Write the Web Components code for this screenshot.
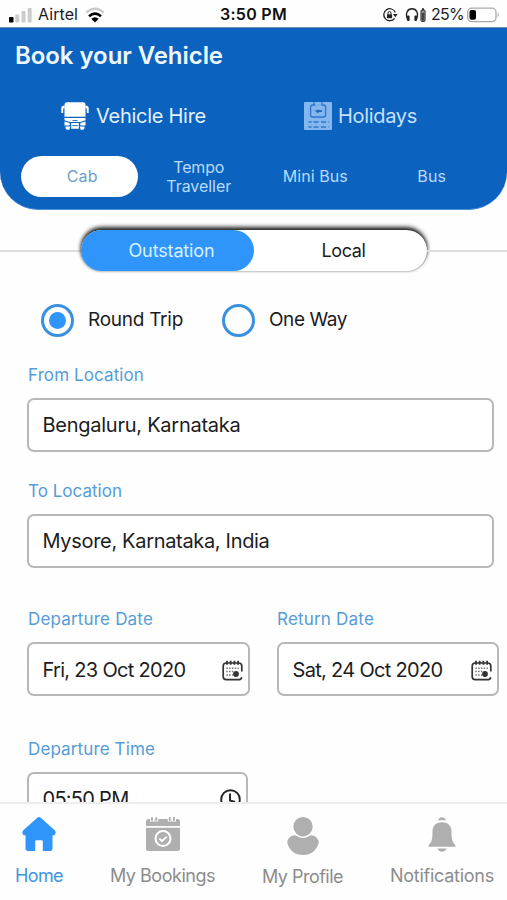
<!DOCTYPE html>
<html lang="en">
<head>
<meta charset="utf-8">
<title>Book your Vehicle</title>
<style>
  html, body { margin: 0; height: 100%; overflow: hidden; background: #fefefe; }
  body { font-family: Inter, "Liberation Sans", sans-serif; color: #1c1c1e; }
</style>
</head>
<body>
<booking-app></booking-app>
<script>
// Registers an element whose shadow root is filled from a template string.
function define(name, render, ready) {
  customElements.define(name, class extends HTMLElement {
    connectedCallback() {
      if (this.shadowRoot) return;
      const t = document.createElement('template');
      t.innerHTML = render(this);
      this.attachShadow({ mode: 'open' }).append(t.content.cloneNode(true));
      if (ready) ready(this);
    }
  });
}

// One line of text, tracked so that it fills the width given in "w".
define('ui-text', el => `
  <style>
    :host { display: inline-block; white-space: nowrap; flex: none; line-height: 1.2; width: ${el.getAttribute('w')}px; }
    span { display: inline-block; }
  </style><span><slot></slot></span>`,
  el => {
    const span = el.shadowRoot.querySelector('span');
    const want = +el.getAttribute('w');
    const have = span.getBoundingClientRect().width;
    span.style.letterSpacing = ((want - have) / el.textContent.length).toFixed(3) + 'px';
  });

const ICONS = {
  signal: [24, 16, `<g><rect x="0" y="10" width="4.500" height="5.500" rx="1" fill="#000"/><rect x="6.300" y="7.400" width="4" height="8.100" rx="1" fill="#ccc"/><rect x="12.500" y="4" width="4" height="11.500" rx="1" fill="#ccc"/><rect x="18.700" y="1" width="4" height="14.500" rx="1" fill="#ccc"/></g>`],
  wifi: [20, 16, `<g fill="none" stroke-width="2.200"><path d="M1.300 5.600Q10-2.200 18.700 5.600" stroke="#cacaca"/><path d="M4 9.200Q10 3.900 16 9.200" stroke="#000" stroke-width="2.600"/></g><path d="M6.300 11.700Q10 8.700 13.700 11.700L10 15.500z" fill="#000"/>`],
  lock: [16, 16, `<path d="M12.600 11.300A6 6 0 1 1 13.300 5.400" fill="none" stroke="#222" stroke-width="1.300"/><path d="M10.900 7h4.800l-2.400 3.300z" fill="#222"/><rect x="4.900" y="7.200" width="5.200" height="4" rx=".6" fill="#222"/><path d="M6 7.400V6a1.500 1.500 0 0 1 3 0v1.400" fill="none" stroke="#222" stroke-width="1"/>`],
  phones: [23, 16, `<path d="M2.600 12.500C-.2 6 2.800 1.800 7 1.800s7.200 4.200 4.400 10.700" fill="none" stroke="#222" stroke-width="1.400"/><rect x="2" y="8.500" width="2.600" height="5.500" rx="1" fill="#222"/><rect x="9.400" y="8.500" width="2.600" height="5.500" rx="1" fill="#222"/><rect x="15.900" y="3" width="4.200" height="11.500" rx="1" fill="#888" stroke="#333" stroke-width=".9"/><rect x="17" y="1.300" width="2" height="1.600" fill="#222"/><rect x="16.800" y="6" width="2.400" height="7.500" fill="#444"/>`],
  battery: [33, 16, `<rect x=".7" y="1.200" width="28.300" height="13.400" rx="4" fill="#fff" stroke="#a9a9a9" stroke-width="1.300"/><rect x="2.500" y="3" width="6.500" height="9.800" rx="2" fill="#000"/><path d="M30.700 5.500q2 2.400 0 4.800z" fill="#999"/>`],
  bus: [28, 28, `<g fill="#fff"><path d="M6 .3h16q2.500 0 2.500 3v11.400H3.500V3.300q0-3 2.500-3z"/><path d="M3.500 3.500Q.3 3.500.3 6v5h1.900V6.500h1.500zM24.500 3.500q3.200 0 3.200 2.500v5h-1.900V6.500h-1.500z"/><path d="M3.500 16h21v2.300l-5 1.700h-11l-5-1.700z"/><path d="M3.500 19.500l5 1.600q1 2-.2 2.400H3.500zM24.500 19.500l-5 1.600q-1 2 .2 2.400h4.800zM10.200 21h7.600v5.800h-7.600zM4.500 24.500h4.800L8.300 27.700H6.500q-2 0-2-2zM23.500 24.500h-4.800l1 3.200h1.800q2 0 2-2z"/></g><path d="M11.500 18.600h5M11.200 23.600h5.600" stroke="#0b62bd" stroke-width=".9"/>`],
  holiday: [28, 28, `<rect width="28" height="28" rx="1" fill="#85b7ee"/><g fill="none" stroke="#2e75c8" stroke-width="1.300"><path d="M10 0v3.500M18 0v3.500"/><rect x="6.600" y="3" width="15" height="12" rx="2"/></g><path d="M9.800 7.700l2.500 1 1.500-1.500 1.500 1H18V10h-2.700l-1.500 1.300L12.300 10z" fill="#2467b8"/><path d="M11 3h6.500" stroke="#85b7ee" stroke-width="1.700"/><g stroke="#2e75c8" stroke-width="1.300" stroke-dasharray="3 2 5 2.500 5 2 3"><path d="M4.500 20h20M4.500 25h20"/></g>`],
  calendar: [21, 21, `<g fill="none" stroke="#333" stroke-width="1.700"><path d="M19.800 11.500V6.200q0-3.200-3.200-3.200H4.300Q1.200 3 1.200 6.200v10.300q0 3.200 3.100 3.200h12.200q2.700 0 3.300-2.500"/><path d="M5 .7v4M8.700 .7v4M12.400 .7v4M16.100 .7v4" stroke-width="1.800"/></g><g stroke="#777" stroke-width="1.500" stroke-dasharray="1.500 1.300"><path d="M4.300 8.300h12.500M4.300 11.600h7M4.300 15h7"/></g><circle cx="14" cy="14" r="2.900" fill="#333"/>`],
  clock: [21, 21, `<g fill="none" stroke="#222" stroke-width="1.900"><circle cx="10.500" cy="10.500" r="9.300"/><path d="M10 4.500v7l5 1.500"/></g>`],
  home: [34, 34, `<path d="M15.300.7q1.700-1.200 3.400 0L33 13.600q1.500 1.900-.4 4.600H30.500v13q0 2.800-2.800 2.800h-6.900V24.500q0-1.200-1.200-1.200h-5.200q-1.200 0-1.200 1.200V34H6.300q-2.800 0-2.800-2.800v-13H1.400Q-.5 15.500 1 13.600z" fill="#2f95fb"/>`],
  bookings: [34, 34, `<path d="M0 4.500q0-2.500 2.500-2.500h29Q34 2 34 4.500V9H0z M0 10.700h34V31.500q0 2.500-2.500 2.500h-29Q0 34 0 31.500z" fill="#afafaf"/><g stroke="#fff" stroke-width="4"><path d="M6 0v4.600M10.300 0v4.600M23.700 0v4.600M28 0v4.600"/></g><g stroke="#afafaf" stroke-width="2" stroke-linecap="round"><path d="M6 1v2M10.300 1v2M23.700 1v2M28 1v2"/></g><g fill="none" stroke="#fff" stroke-width="2"><circle cx="17" cy="21.500" r="7.500"/><path d="M13.300 21.500l2.700 2.600 4.700-4.500"/></g>`],
  profile: [32, 38, `<circle cx="16" cy="9.700" r="9.700" fill="#afafaf"/><path d="M5 18.800Q8 17.500 9.800 19q6.200 4 12.400 0Q24 17.500 27 18.800q5 2.700 4.700 7.200Q28 38 16 38T.3 26Q0 21.500 5 18.800z" fill="#afafaf"/>`],
  bell: [28, 35, `<g fill="#afafaf"><path d="M10 3.500q1.300-3.300 4-3.300t4 3.300Q14 2.300 10 3.500z"/><path d="M14 5.200c6.500 0 9.500 4 9.500 9.300 0 7.500.8 10.500 3.700 13.500.7.800.4 1.700-.7 1.700h-25c-1.100 0-1.400-.9-.7-1.700 2.900-3 3.700-6 3.700-13.500 0-5.300 3-9.300 9.500-9.300z"/><path d="M9.500 31.500h9q-1.200 3.300-4.500 3.300t-4.500-3.300z"/></g>`]
};

define('ui-icon', el => {
  const [w, h, body] = ICONS[el.getAttribute('name')];
  return `<style>:host{display:block;flex:none;width:${w}px;height:${h}px}svg{display:block}</style>
    <svg width="${w}" height="${h}" viewBox="0 0 ${w} ${h}">${body}</svg>`;
});

define('status-bar', () => `
  <style>
    :host { display: grid; grid-template-columns: 1fr auto 1fr; align-items: center; height: 28px; padding: 3px 9px 0 9px; box-sizing: border-box; font-size: 16px; border-bottom: 1px solid #6f8fae; }
    div { display: flex; align-items: center; }
    .right { justify-content: flex-end; }
    b { font-weight: 600; color: #111; display: flex; }
  </style>
  <div><ui-icon name="signal"></ui-icon><ui-text w="40" style="margin:0 7px 0 5px">Airtel</ui-text><ui-icon name="wifi"></ui-icon></div>
  <b><ui-text w="67">3:50 PM</ui-text></b>
  <div class="right"><ui-icon name="lock" style="margin-right:7px"></ui-icon><ui-icon name="phones" style="margin-right:3px"></ui-icon><ui-text w="33" style="margin-right:3px">25%</ui-text><ui-icon name="battery" style="margin-right:-2px"></ui-icon></div>`);

define('mode-tab', el => `
  <style>
    :host { display: flex; align-items: center; gap: 7px; font-size: 20px; color: #c5e1fc; }
  </style>
  <ui-icon name="${el.getAttribute('icon')}"></ui-icon><slot></slot>`);

define('vehicle-tab', () => `
  <style>
    :host { display: flex; flex-direction: column; align-items: center; justify-content: center; box-sizing: border-box; width: 116.500px; height: 41px; padding: 1px 0 0 6px; border-radius: 21px; font-size: 16px; color: #b9dcfc; }
    :host([active]) { background: #fff; color: #6f9fd0; }
  </style><slot></slot>`);

define('app-header', () => `
  <style>
    :host { display: block; box-sizing: border-box; height: 182px; background: #0b62bf; border-radius: 0 0 38px 38px; padding: 14px 0 0; border-bottom: 1px solid #4d90d6; }
    h1 { margin: 0 15px; font-size: 24px; font-weight: 600; color: #eef7ff; display: flex; }
    .modes { display: flex; padding: 31px 0 0 61px; gap: 98px; }
    .modes mode-tab:first-child { color: #e4f2ff; }
    .types { display: flex; padding: 26px 0 0 21px; }
  </style>
  <h1><ui-text w="208">Book your Vehicle</ui-text></h1>
  <div class="modes">
    <mode-tab icon="bus"><ui-text w="110">Vehicle Hire</ui-text></mode-tab>
    <mode-tab icon="holiday" style="gap:6px"><ui-text w="79">Holidays</ui-text></mode-tab>
  </div>
  <div class="types">
    <vehicle-tab active><ui-text w="31">Cab</ui-text></vehicle-tab>
    <vehicle-tab><ui-text w="51">Tempo</ui-text><ui-text w="65">Traveller</ui-text></vehicle-tab>
    <vehicle-tab><ui-text w="65">Mini Bus</ui-text></vehicle-tab>
    <vehicle-tab><ui-text w="29">Bus</ui-text></vehicle-tab>
  </div>`);

define('trip-switch', () => `
  <style>
    :host { display: flex; align-items: center; margin-top: 20px; font-size: 18px; }
    i { flex: 1; height: 2px; background: #dcdcdc; }
    i:last-child { flex: 0 0 80px; }
    .pill { display: flex; width: 346px; height: 41px; border-radius: 21px; background: #fff; box-shadow: 0 -3px 4px 0 #222, 0 0 3px #888; }
    .pill > div { width: 173px; border-radius: 21px; display: flex; align-items: center; justify-content: center; box-sizing: border-box; }
    .on { background: #2f95fb; color: #d8f0ff; padding-left: 8px; }
    .off { padding-left: 6px; }
  </style>
  <i></i><div class="pill"><div class="on"><ui-text w="86">Outstation</ui-text></div><div class="off"><ui-text w="44">Local</ui-text></div></div><i></i>`);

define('radio-option', () => `
  <style>
    :host { display: flex; align-items: center; gap: 14px; font-size: 19px; }
    .ring { width: 33px; height: 33px; box-sizing: border-box; border: 3px solid #3990df; border-radius: 50%; display: grid; place-items: center; }
    :host([checked]) .ring::after { content: ""; width: 17px; height: 17px; border-radius: 50%; background: #2f95fb; }
  </style><div class="ring"></div><slot></slot>`);

define('form-field', () => `
  <style>
    :host { display: block; }
    .label { display: flex; font-size: 17px; color: #559cd8; height: 20px; align-items: center; margin-bottom: 13px; }
    .box { display: flex; align-items: center; justify-content: space-between; box-sizing: border-box; height: var(--box, 54px); border: 2px solid #b8b8b8; border-radius: 7px; padding: var(--drop, 0px) 5.500px 0 13.500px; font-size: 20px; background: #fff; }
  </style>
  <div class="label"><slot name="label"></slot></div>
  <div class="box"><slot></slot><slot name="icon"></slot></div>`);

define('nav-item', el => `
  <style>
    :host { display: flex; flex-direction: column; align-items: center; font-size: 18px; color: #8c8c8c; gap: 14px; }
    :host([active]) { color: #3d95e4; }
  </style>
  <ui-icon name="${el.getAttribute('icon')}"></ui-icon><slot></slot>`);

define('nav-bar', () => `
  <style>
    :host { display: flex; align-items: flex-start; box-sizing: border-box; height: 98px; padding: 13px 13px 0 15px; border-top: 2px solid #ededed; background: #fefefe; justify-content: space-between; }
  </style>
  <nav-item icon="home" active><ui-text w="48">Home</ui-text></nav-item>
  <nav-item icon="bookings"><ui-text w="105">My Bookings</ui-text></nav-item>
  <nav-item icon="profile" style="gap:11px"><ui-text w="81">My Profile</ui-text></nav-item>
  <nav-item icon="bell" style="gap:13px"><ui-text w="104">Notifications</ui-text></nav-item>`);

define('booking-app', () => `
  <style>
    :host { display: flex; flex-direction: column; width: 507px; height: 900px; overflow: hidden; }
    main { flex: 1; min-height: 0; overflow: hidden; }
    .radios { display: flex; gap: 39px; padding: 33px 0 0 41px; }
    form { padding-left: 27px; }
    .wide { width: 467px; }
    .dates { display: flex; gap: 27px; margin-top: 41px; }
    .dates form-field { width: 223px; --drop: 2px; }
  </style>
  <status-bar></status-bar>
  <app-header></app-header>
  <main>
    <trip-switch></trip-switch>
    <div class="radios">
      <radio-option checked><ui-text w="95">Round Trip</ui-text></radio-option>
      <radio-option><ui-text w="78">One Way</ui-text></radio-option>
    </div>
    <form>
      <form-field class="wide" style="margin-top:28px"><ui-text slot="label" w="116" style="margin-left:1px">From Location</ui-text><ui-text w="198">Bengaluru, Karnataka</ui-text></form-field>
      <form-field class="wide" style="margin-top:29px"><ui-text slot="label" w="94" style="margin-left:1px">To Location</ui-text><ui-text w="227">Mysore, Karnataka, India</ui-text></form-field>
      <div class="dates">
        <form-field><ui-text slot="label" w="125" style="margin-left:1px">Departure Date</ui-text><ui-text w="143">Fri, 23 Oct 2020</ui-text><ui-icon slot="icon" name="calendar"></ui-icon></form-field>
        <form-field style="width:222px"><ui-text slot="label" w="97">Return Date</ui-text><ui-text w="150">Sat, 24 Oct 2020</ui-text><ui-icon slot="icon" name="calendar"></ui-icon></form-field>
      </div>
      <form-field style="width:221px;margin-top:43px"><ui-text slot="label" w="127" style="margin-left:1px">Departure Time</ui-text><ui-text w="86">05:50 PM</ui-text><ui-icon slot="icon" name="clock"></ui-icon></form-field>
    </form>
  </main>
  <nav-bar></nav-bar>`);
</script>
</body>
</html>
